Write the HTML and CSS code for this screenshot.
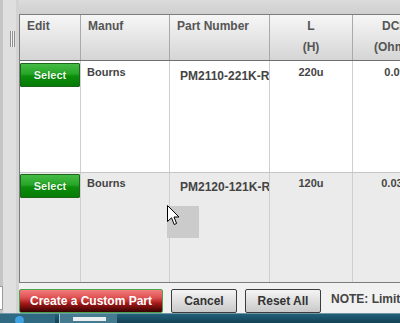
FILE: index.html
```html
<!DOCTYPE html>
<html lang="en">

<head>
    <meta charset="UTF-8">
    <meta name="viewport" content="width=device-width, initial-scale=1.0">
    <title>Inductor Selection</title>
    <link rel="stylesheet" href="styles.css">
</head>

<body>
    <div class="screen">
        <div class="workspace">
            <div class="splitter">
                <span class="grip"></span>
                <span class="stub"></span>
            </div>

            <div class="panel">
                <div class="panel-top"></div>

                <div class="grid">
                    <div class="row head">
                        <div>Edit</div>
                        <div>Manuf</div>
                        <div>Part Number</div>
                        <div class="num">L<br>(H)</div>
                        <div class="num">DCR<br>(Ohms)</div>
                    </div>
                    <div class="row item first">
                        <div class="edit"><button class="select">Select</button></div>
                        <div>Bourns</div>
                        <div class="part">PM2110-221K-RC</div>
                        <div class="num">220u</div>
                        <div class="num">0.09</div>
                    </div>
                    <div class="row item alt">
                        <div class="edit"><button class="select">Select</button></div>
                        <div>Bourns</div>
                        <div class="part">PM2120-121K-RC</div>
                        <div class="num">120u</div>
                        <div class="num">0.035</div>
                    </div>
                </div>

                <div class="actions">
                    <button class="btn btn-create">Create a Custom Part</button>
                    <button class="btn btn-cancel">Cancel</button>
                    <button class="btn btn-reset">Reset All</button>
                    <span class="note">NOTE: Limits apply</span>
                </div>
            </div>
        </div>

        <div class="taskbar">
            <div class="task-start"><span class="orb"></span></div>
            <div class="task-btn"><span class="task-icon"></span></div>
        </div>

        <!-- mouse pointer over the second row -->
        <div class="hover-box"></div>
        <svg class="cursor" width="13" height="21" viewBox="0 0 13 21">
            <path d="M0.5 0.5 L0.5 16.5 L4.5 12.8 L7.2 19.5 L9.6 18.5 L7 12 L12 12 Z" fill="#fff" stroke="#000" stroke-width="1" stroke-linejoin="round"/>
        </svg>
    </div>
</body>

</html>
```

FILE: styles.css
```css
* {
    box-sizing: border-box;
}

body {
    margin: 0;
    font-family: "Liberation Sans", Arial, sans-serif;
    background-color: #d9d9d9;
}

.screen {
    position: relative;
    width: 400px;
    height: 323px;
    overflow: hidden;
    display: flex;
    flex-direction: column;
}

.workspace {
    display: flex;
    height: 316px;
}

.splitter {
    flex: none;
    width: 19px;
    display: flex;
    flex-direction: column;
    background: linear-gradient(to right, #c5c5c5 0 3px, #dfdfdf 3px 16px, #d3d3d3 16px);
}

.grip {
    width: 5px;
    height: 16px;
    margin: 31px 0 0 10px;
    background: repeating-linear-gradient(to right, #8f8f8f 0 1px, #f2f2f2 1px 2px);
}

.stub {
    width: 3px;
    height: 24px;
    margin-top: auto;
    margin-bottom: 3px;
    background-color: #fff;
    border: 1px solid #9a9a9a;
    border-left: 0;
}

.panel {
    flex: 1;
    min-width: 0;
    display: flex;
    flex-direction: column;
    background-color: #f1f1f1;
}

.panel-top {
    height: 14px;
    background: linear-gradient(#dbdbdb, #cfcfcf);
}

.grid {
    height: 269px;
    display: flex;
    flex-direction: column;
    border: 1px solid #7c7c7c;
    border-right: 0;
    overflow: hidden;
    background-color: #fff;
}

.row {
    display: grid;
    grid-template-columns: 61px 89px 100px 83px 85px;
}

.row > div {
    border-right: 1px solid #cfcfcf;
    overflow: hidden;
    white-space: nowrap;
}

.head {
    flex: none;
    height: 46px;
    border-bottom: 1px solid #6f6f6f;
    background: linear-gradient(#f6f6f6, #d5d5d5);
}

.head > div {
    border-right-color: #a9a9a9;
    padding: 1px 0 0 7px;
    font-size: 12px;
    font-weight: bold;
    line-height: 21px;
    color: #555;
}

.head > .num {
    padding-left: 0;
}

.item > div {
    padding: 5px 0 0 6px;
    font-size: 11px;
    font-weight: bold;
    line-height: 13px;
    color: #444;
}

.item > .num {
    padding-left: 0;
}

.num {
    text-align: center;
}

.item > .edit {
    padding: 2px 0 0;
}

.item > .part {
    padding: 8px 0 0 10px;
    font-size: 12px;
    line-height: 14px;
    text-overflow: clip;
}

.first {
    flex: none;
    height: 112px;
    border-bottom: 1px solid #c6c6c6;
}

.alt {
    flex: 1;
    background-color: #ebebeb;
}

.alt > div {
    padding-top: 4px;
}

.alt > .edit {
    padding-top: 1px;
}

.alt > .part {
    padding-top: 7px;
}

.select {
    display: block;
    width: 60px;
    height: 24px;
    padding: 0;
    border: 1px solid #1d641d;
    border-radius: 1px;
    background: linear-gradient(#46bb46, #26a626 45%, #0c8d0c 55%, #067c06);
    color: #ecffec;
    font: bold 11px "Liberation Sans", Arial, sans-serif;
    text-shadow: 0 0 1px #0a5a0a;
}

.actions {
    flex: 1;
    display: flex;
    align-items: flex-start;
    gap: 8px;
    padding-top: 6px;
}

.btn {
    flex: none;
    height: 24px;
    padding: 0;
    border: 1px solid #3c3c3c;
    border-radius: 2px;
    background: linear-gradient(#f4f4f4, #c9c9c9);
    color: #333;
    font: bold 12px "Liberation Sans", Arial, sans-serif;
}

.btn-create {
    width: 144px;
    border-color: #4aa24a;
    background: linear-gradient(#f27c7c, #df5050 35%, #a11818 62%, #360000);
    color: #fff;
}

.btn-cancel {
    width: 66px;
}

.btn-reset {
    width: 76px;
}

.note {
    margin-left: 2px;
    padding-top: 3px;
    font-size: 12px;
    font-weight: bold;
    line-height: 14px;
    color: #444;
    white-space: nowrap;
}

.taskbar {
    flex: 1;
    display: flex;
    gap: 4px;
    border-top: 1px solid #6f97a6;
    background: linear-gradient(#22607a, #0f3a4c);
}

.task-start {
    width: 55px;
    padding-left: 15px;
    background-color: #2f6a82;
}

.orb {
    display: block;
    width: 9px;
    height: 9px;
    margin-top: 2px;
    border-radius: 50%;
    background-color: #3fa2e2;
}

.task-btn {
    width: 58px;
    padding: 3px 0 0 13px;
    background-color: #447b90;
    border-left: 1px solid #a9c5d0;
}

.task-icon {
    display: block;
    width: 33px;
    height: 4px;
    background-color: #e9eef0;
}

.hover-box {
    position: absolute;
    left: 167px;
    top: 206px;
    width: 32px;
    height: 32px;
    background-color: #cbcbcb;
}

.cursor {
    position: absolute;
    left: 167px;
    top: 205px;
}
```
